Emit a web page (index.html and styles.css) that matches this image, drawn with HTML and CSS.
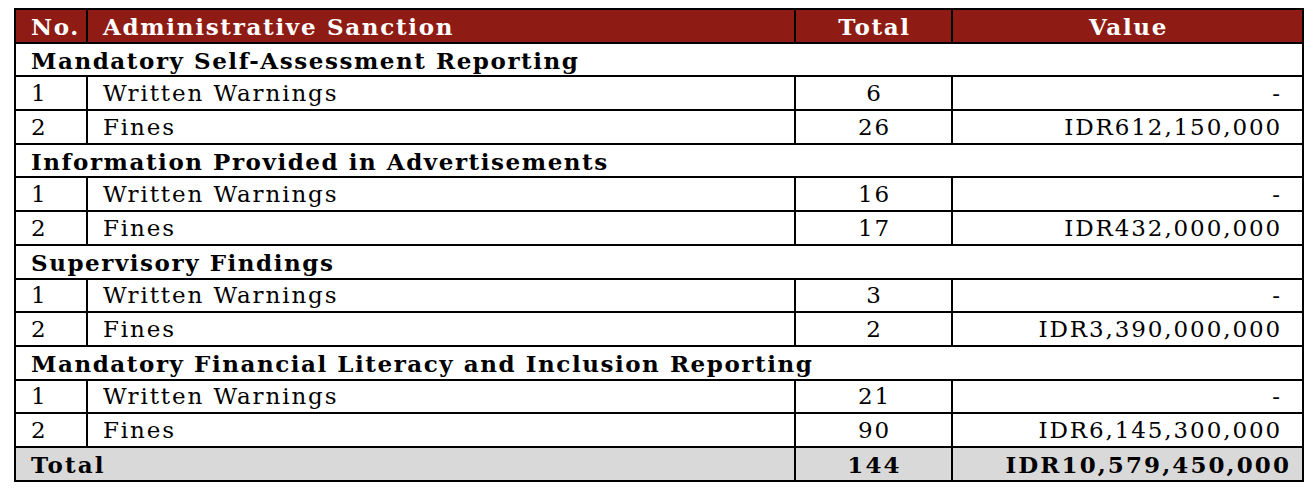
FILE: index.html
```html
<!DOCTYPE html>
<html>
<head>
<meta charset="utf-8">
<link rel="stylesheet" href="styles.css">
</head>
<body>
<table class="sanctions">
  <colgroup>
    <col class="c-no">
    <col class="c-name">
    <col class="c-total">
    <col class="c-value">
  </colgroup>
  <thead>
    <tr class="head">
      <th class="left">No.</th>
      <th class="left">Administrative Sanction</th>
      <th class="center">Total</th>
      <th class="center">Value</th>
    </tr>
  </thead>
  <tbody>
    <tr class="section"><td colspan="4">Mandatory Self-Assessment Reporting</td></tr>
    <tr><td>1</td><td>Written Warnings</td><td class="center">6</td><td class="right">-</td></tr>
    <tr><td>2</td><td>Fines</td><td class="center">26</td><td class="right">IDR612,150,000</td></tr>
    <tr class="section"><td colspan="4">Information Provided in Advertisements</td></tr>
    <tr><td>1</td><td>Written Warnings</td><td class="center">16</td><td class="right">-</td></tr>
    <tr><td>2</td><td>Fines</td><td class="center">17</td><td class="right">IDR432,000,000</td></tr>
    <tr class="section"><td colspan="4">Supervisory Findings</td></tr>
    <tr><td>1</td><td>Written Warnings</td><td class="center">3</td><td class="right">-</td></tr>
    <tr><td>2</td><td>Fines</td><td class="center">2</td><td class="right">IDR3,390,000,000</td></tr>
    <tr class="section"><td colspan="4">Mandatory Financial Literacy and Inclusion Reporting</td></tr>
    <tr><td>1</td><td>Written Warnings</td><td class="center">21</td><td class="right">-</td></tr>
    <tr><td>2</td><td>Fines</td><td class="center">90</td><td class="right">IDR6,145,300,000</td></tr>
    <tr class="total"><td colspan="2">Total</td><td class="center">144</td><td class="right">IDR10,579,450,000</td></tr>
  </tbody>
</table>
</body>
</html>
```

FILE: styles.css
```css
html, body {
  margin: 0;
  padding: 0;
  background: #ffffff;
}
body {
  padding: 8px 0 0 14px;
  font-family: "DejaVu Serif", "Liberation Serif", serif;
  color: #000;
}
.sanctions {
  border-collapse: collapse;
  table-layout: fixed;
  width: 1288px;
  font-size: 23px;
  letter-spacing: 1.9px;
}
.c-no { width: 72px; }
.c-name { width: 708px; }
.c-total { width: 157px; }
.c-value { width: 351px; }
.sanctions th,
.sanctions td {
  border: 2px solid #000;
  height: 33.7px;
  padding: 1px 13px 0 15px;
  box-sizing: border-box;
  white-space: nowrap;
  vertical-align: middle;
  line-height: 1;
}
.head th {
  background: #8e1c14;
  color: #fff;
  font-weight: bold;
  letter-spacing: 1.7px;
}
.section td {
  font-weight: bold;
  letter-spacing: 1.55px;
}
.total td {
  background: #d9d9d9;
  font-weight: bold;
  letter-spacing: 2.1px;
}
.left { text-align: left; }
.center { text-align: center; }
.right { text-align: right; }
.sanctions td.center,
.sanctions th.center { padding-left: 4px; padding-right: 2px; }
.sanctions td.right { padding-right: 20px; }
.sanctions .total td.right { padding-right: 11px; }
```
